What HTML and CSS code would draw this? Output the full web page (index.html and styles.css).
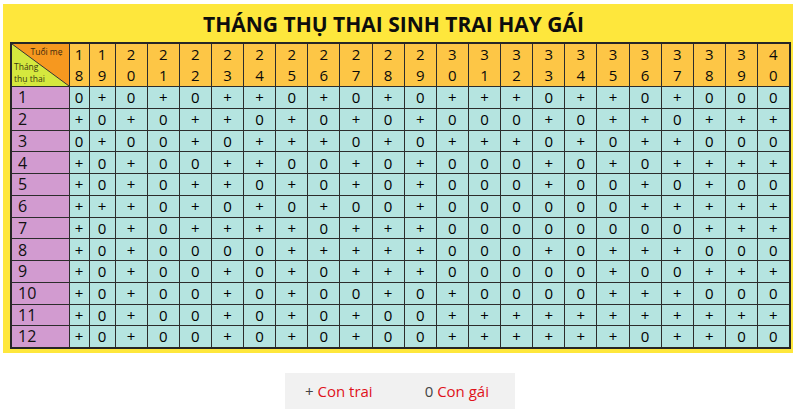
FILE: index.html
```html
<!DOCTYPE html>
<html lang="vi">
<head>
<meta charset="utf-8">
<title>Tháng thụ thai sinh trai hay gái</title>
<link rel="stylesheet" href="styles.css">
</head>
<body>
<div class="board">
  <h1 class="title">THÁNG THỤ THAI SINH TRAI HAY GÁI</h1>
  <table class="chart">
    <colgroup>
      <col class="c-label"><col class="c-18"><col class="c-19">
      <col span="21" class="c-age">
    </colgroup>
    <thead>
      <tr class="head-row">
        <th class="corner"><span class="corner-top">Tuổi mẹ</span><span class="corner-bottom">Tháng<br>thụ thai</span></th>
        <th>1<br>8</th><th>1<br>9</th><th>2<br>0</th><th>2<br>1</th><th>2<br>2</th><th>2<br>3</th><th>2<br>4</th><th>2<br>5</th><th>2<br>6</th><th>2<br>7</th><th>2<br>8</th><th>2<br>9</th><th>3<br>0</th><th>3<br>1</th><th>3<br>2</th><th>3<br>3</th><th>3<br>4</th><th>3<br>5</th><th>3<br>6</th><th>3<br>7</th><th>3<br>8</th><th>3<br>9</th><th>4<br>0</th>
      </tr>
    </thead>
    <tbody>
      <tr><th>1</th><td>0</td><td>+</td><td>0</td><td>+</td><td>0</td><td>+</td><td>+</td><td>0</td><td>+</td><td>0</td><td>+</td><td>0</td><td>+</td><td>+</td><td>+</td><td>0</td><td>+</td><td>+</td><td>0</td><td>+</td><td>0</td><td>0</td><td>0</td></tr>
      <tr><th>2</th><td>+</td><td>0</td><td>+</td><td>0</td><td>+</td><td>+</td><td>0</td><td>+</td><td>0</td><td>+</td><td>0</td><td>+</td><td>0</td><td>0</td><td>0</td><td>+</td><td>0</td><td>+</td><td>+</td><td>0</td><td>+</td><td>+</td><td>+</td></tr>
      <tr><th>3</th><td>0</td><td>+</td><td>0</td><td>0</td><td>+</td><td>0</td><td>+</td><td>+</td><td>+</td><td>0</td><td>+</td><td>0</td><td>+</td><td>+</td><td>+</td><td>0</td><td>+</td><td>0</td><td>+</td><td>+</td><td>0</td><td>0</td><td>0</td></tr>
      <tr><th>4</th><td>+</td><td>0</td><td>+</td><td>0</td><td>0</td><td>+</td><td>+</td><td>0</td><td>0</td><td>+</td><td>0</td><td>+</td><td>0</td><td>0</td><td>0</td><td>+</td><td>0</td><td>+</td><td>0</td><td>+</td><td>+</td><td>+</td><td>+</td></tr>
      <tr><th>5</th><td>+</td><td>0</td><td>+</td><td>0</td><td>+</td><td>+</td><td>0</td><td>+</td><td>0</td><td>+</td><td>0</td><td>+</td><td>0</td><td>0</td><td>0</td><td>+</td><td>0</td><td>0</td><td>+</td><td>0</td><td>+</td><td>0</td><td>0</td></tr>
      <tr><th>6</th><td>+</td><td>+</td><td>+</td><td>0</td><td>+</td><td>0</td><td>+</td><td>0</td><td>+</td><td>0</td><td>0</td><td>+</td><td>0</td><td>0</td><td>0</td><td>0</td><td>0</td><td>0</td><td>+</td><td>+</td><td>+</td><td>+</td><td>+</td></tr>
      <tr><th>7</th><td>+</td><td>0</td><td>+</td><td>0</td><td>+</td><td>+</td><td>+</td><td>+</td><td>0</td><td>+</td><td>+</td><td>+</td><td>0</td><td>0</td><td>0</td><td>0</td><td>0</td><td>0</td><td>0</td><td>0</td><td>+</td><td>+</td><td>+</td></tr>
      <tr><th>8</th><td>+</td><td>0</td><td>+</td><td>0</td><td>0</td><td>0</td><td>0</td><td>+</td><td>+</td><td>+</td><td>+</td><td>+</td><td>0</td><td>0</td><td>0</td><td>+</td><td>0</td><td>+</td><td>+</td><td>+</td><td>0</td><td>0</td><td>0</td></tr>
      <tr><th>9</th><td>+</td><td>0</td><td>+</td><td>0</td><td>0</td><td>+</td><td>0</td><td>+</td><td>0</td><td>+</td><td>+</td><td>+</td><td>0</td><td>0</td><td>0</td><td>0</td><td>0</td><td>+</td><td>0</td><td>0</td><td>+</td><td>+</td><td>+</td></tr>
      <tr><th>10</th><td>+</td><td>0</td><td>+</td><td>0</td><td>0</td><td>+</td><td>0</td><td>+</td><td>0</td><td>0</td><td>+</td><td>0</td><td>+</td><td>0</td><td>0</td><td>0</td><td>0</td><td>+</td><td>+</td><td>+</td><td>0</td><td>0</td><td>0</td></tr>
      <tr><th>11</th><td>+</td><td>0</td><td>+</td><td>0</td><td>0</td><td>+</td><td>0</td><td>+</td><td>0</td><td>+</td><td>0</td><td>0</td><td>+</td><td>+</td><td>+</td><td>+</td><td>+</td><td>+</td><td>+</td><td>+</td><td>+</td><td>+</td><td>+</td></tr>
      <tr><th>12</th><td>+</td><td>0</td><td>+</td><td>0</td><td>0</td><td>+</td><td>0</td><td>+</td><td>0</td><td>+</td><td>0</td><td>0</td><td>+</td><td>+</td><td>+</td><td>+</td><td>+</td><td>+</td><td>0</td><td>+</td><td>+</td><td>0</td><td>0</td></tr>
    </tbody>
  </table>
</div>
<div class="legend">
  <span class="legend-item">+ <span class="legend-name">Con trai</span></span>
  <span class="legend-item">0 <span class="legend-name">Con gái</span></span>
</div>
</body>
</html>
```
FILE: styles.css
```css
* { box-sizing: border-box; }

html, body {
  margin: 0;
  padding: 0;
  background: #ffffff;
}

body {
  font-family: "Open Sans", "Liberation Sans", sans-serif;
  color: #1f1f1f;
}

.board {
  width: 790px;
  height: 349px;
  margin: 4px 0 0 3px;
  padding: 0 0 0 7px;
  background: #fee73c;
}

.title {
  margin: 0;
  height: 38px;
  padding-top: 6px;
  font-size: 21px;
  line-height: 28px;
  font-weight: 700;
  text-align: center;
  color: #0d0d0d;
  padding-right: 16px;
}

.chart {
  border-collapse: collapse;
  table-layout: fixed;
  width: 779px;
  border: 2px solid #262626;
}

.c-label { width: 58px; }
.c-18 { width: 20px; }
.c-19 { width: 26px; }
.c-age { width: 32.14px; }

.chart th,
.chart td {
  border: 1px solid #2c2c2c;
  padding: 0;
  text-align: center;
  font-weight: 400;
}

.head-row th {
  height: 42px;
  background: #fdc646;
  font-size: 15px;
  line-height: 21px;
  color: #0a0a0a;
}

.head-row .corner {
  position: relative;
  background:
    linear-gradient(to bottom left, transparent calc(50% - 0.8px), #333333 50%, transparent calc(50% + 0.8px)),
    linear-gradient(to bottom left, #f6981f 50%, #d5e83e 50%);
  font-size: 8.5px;
  line-height: 12px;
  text-align: left;
}

.corner-top {
  position: absolute;
  top: 2px;
  right: 6px;
  color: #3b2a10;
}

.corner-bottom {
  position: absolute;
  left: 2px;
  bottom: 1px;
  color: #3a3a10;
}

.chart tbody th {
  height: 21.75px;
  background: #d29bd0;
  text-align: left;
  padding-left: 6px;
  font-size: 16px;
  line-height: 18px;
  color: #111111;
}

.chart td {
  height: 21.75px;
  background: #b5e4e0;
  font-size: 15px;
  line-height: 18px;
  color: #000000;
}

.legend {
  display: flex;
  gap: 52px;
  width: 230px;
  height: 36px;
  margin: 20px 0 0 285px;
  padding: 0 0 0 20px;
  align-items: center;
  background: #f1f1f1;
  font-size: 15px;
  color: #444444;
}

.legend-name {
  color: #e0121b;
}
```
